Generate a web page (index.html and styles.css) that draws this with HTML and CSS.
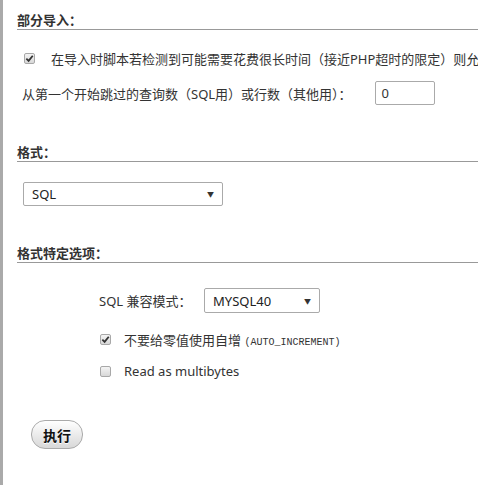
FILE: index.html
```html
<!DOCTYPE html>
<html lang="zh-CN">
<head>
  <meta charset="UTF-8" />
  <title>导入</title>
  <link rel="stylesheet" href="styles.css">
</head>
<body>
  <div class="page">
    <h3 class="legend">部分导入：</h3>
    <div class="row check-row">
      <span class="check checked"><svg viewBox="0 0 10 10" width="9" height="9"><path d="M1.5 5.2 L4 7.6 L8.6 2" fill="none" stroke="#333" stroke-width="2"/></svg></span>
      <span class="check-text">在导入时脚本若检测到可能需要花费很长时间（接近PHP超时的限定）则允许中断。</span>
    </div>
    <div class="row skip-row">
      <span class="skip-label">从第一个开始跳过的查询数（SQL用）或行数（其他用）：</span>
      <span class="text-input">0</span>
    </div>

    <h3 class="legend gap">格式：</h3>
    <div class="select format-select"><span>SQL</span><span class="arrow">▼</span></div>

    <h3 class="legend gap">格式特定选项：</h3>
    <div class="options">
      <div class="row compat-row">
        <span class="compat-label">SQL 兼容模式：</span>
        <div class="select compat-select"><span>MYSQL40</span><span class="arrow">▼</span></div>
      </div>
      <div class="row opt-row">
        <span class="check checked"><svg viewBox="0 0 10 10" width="9" height="9"><path d="M1.5 5.2 L4 7.6 L8.6 2" fill="none" stroke="#333" stroke-width="2"/></svg></span>
        <span class="opt-text">不要给零值使用自增 <code>(AUTO_INCREMENT)</code></span>
      </div>
      <div class="row opt-row second">
        <span class="check"></span>
        <span class="opt-text">Read as multibytes</span>
      </div>
    </div>

    <button class="go">执行</button>
  </div>
</body>
</html>
```

FILE: styles.css
```css
html, body {
  margin: 0;
  overflow: hidden;
  background: #fff;
}

body {
  font-family: "Noto Sans", "Noto Sans CJK SC", sans-serif;
  font-size: 13px;
  color: #333;
}

.page {
  border-left: 3px solid #aaa;
  min-height: 485px;
  padding-left: 14px;
  box-sizing: border-box;
}

.legend {
  margin: 0;
  padding-top: 12px;
  font-size: 13px;
  font-weight: bold;
  line-height: 17px;
  border-bottom: 1px solid #999;
  white-space: nowrap;
}

.legend.gap {
  padding-top: 0;
  margin-top: 39px;
}

.row {
  display: flex;
  align-items: center;
  white-space: nowrap;
}

.check {
  display: inline-flex;
  align-items: center;
  justify-content: center;
  width: 9px;
  height: 9px;
  border: 1px solid #a8a8a8;
  border-radius: 2px;
  background: linear-gradient(#f4f4f4, #d8d8d8);
  flex: none;
}

.check-row {
  margin-top: 18px;
  height: 20px;
  padding-left: 7px;
}

.check-text {
  margin-left: 16px;
}

.skip-row {
  margin-top: 13px;
  padding-left: 5px;
}

.text-input {
  box-sizing: border-box;
  width: 60px;
  height: 24px;
  margin-left: 23px;
  padding-left: 6px;
  border: 1px solid #aaa;
  border-radius: 2px;
  line-height: 22px;
}

.select {
  display: flex;
  align-items: center;
  justify-content: space-between;
  box-sizing: border-box;
  height: 24px;
  padding: 0 8px 0 8px;
  border: 1px solid #aaa;
  border-radius: 2px;
  background: #fff;
  color: #222;
}

.select .arrow {
  font-size: 7px;
  color: #333;
}

.format-select {
  width: 200px;
  margin: 20px 0 0 6px;
}

.options {
  padding-left: 82px;
}

.compat-row {
  margin-top: 25px;
}

.compat-label {
  width: 105px;
}

.compat-select {
  width: 116px;
  height: 25px;
}

.opt-row {
  margin-top: 16px;
  height: 20px;
  padding-left: 1px;
}

.opt-row.second {
  margin-top: 12px;
}

.opt-text {
  margin-left: 13px;
}

code {
  font-family: "Liberation Mono", monospace;
  font-size: 10px;
}

.go {
  display: block;
  margin: 39px 0 0 14px;
  width: 52px;
  height: 29px;
  padding: 0;
  border: 1px solid #aaa;
  border-radius: 14px;
  background: linear-gradient(#fff, #d8d8d8);
  font-family: "Noto Sans CJK SC", sans-serif;
  font-size: 14px;
  font-weight: bold;
  color: #111;
  text-shadow: 0 1px 0 #fff;
}
```
